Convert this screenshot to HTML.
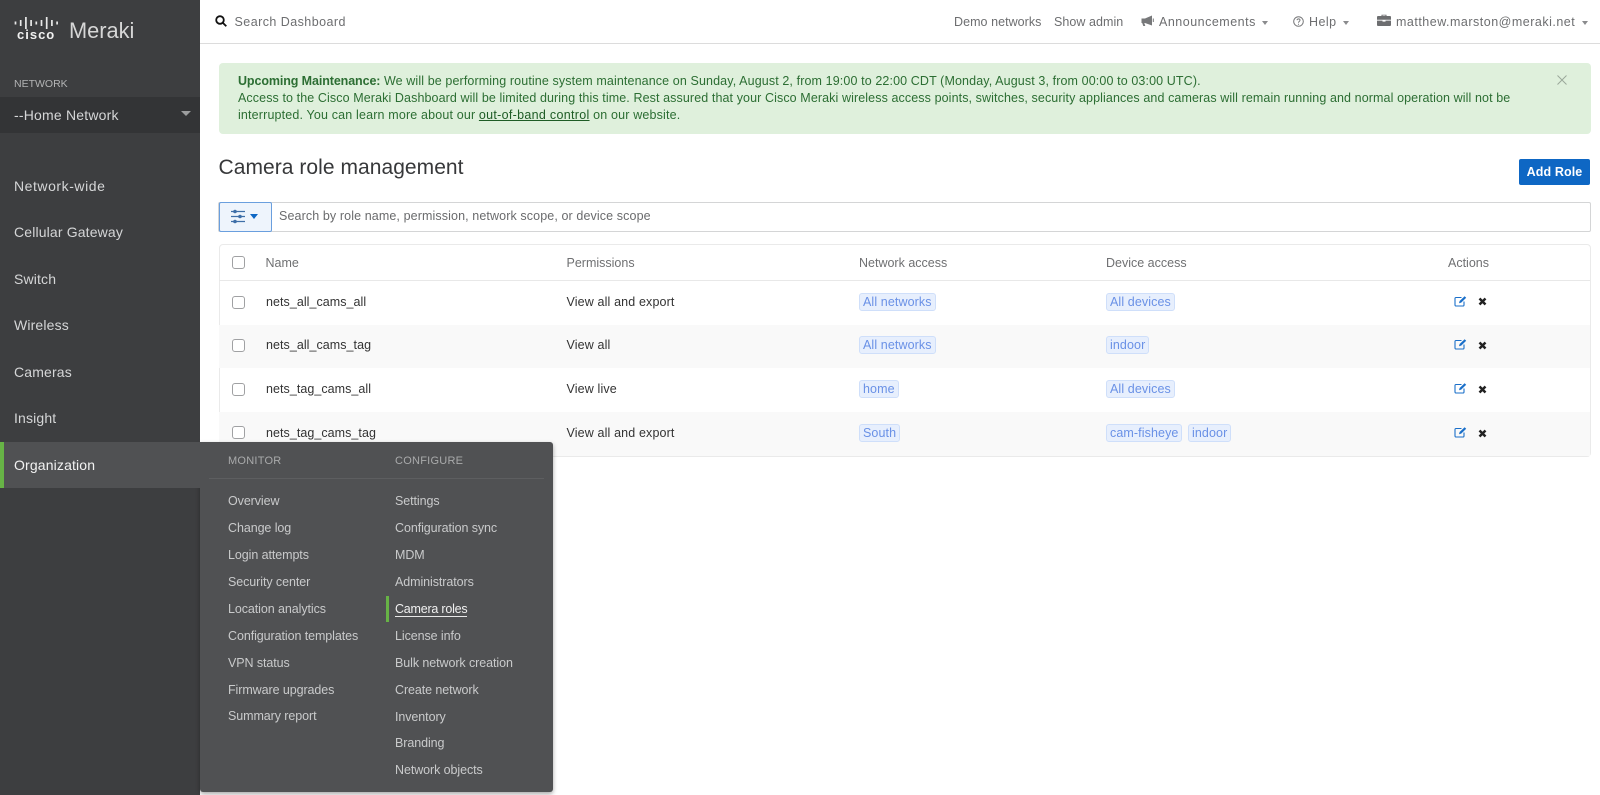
<!DOCTYPE html>
<html><head><meta charset="utf-8"><style>
html,body{margin:0;padding:0;width:1600px;height:795px;overflow:hidden;background:#fff}
body{position:relative;font-family:"Liberation Sans",sans-serif;font-size:13px;color:#333}
.a{position:absolute;white-space:nowrap;line-height:20px;height:20px}
.nav{left:14px;font-size:14px;letter-spacing:.15px;color:#d5d6d7}
.hd{color:#6d6e70;font-size:12.5px;letter-spacing:.05px;top:12px}
.th{top:253px;color:#6f7072;font-size:12.5px;letter-spacing:0}
.td{color:#333;font-size:12.5px;letter-spacing:.05px}
.pm{letter-spacing:.14px}
.tag{position:absolute;height:16px;line-height:16px;padding:0 3px;background:#e7effd;border:1px solid #cfdffa;border-radius:3px;color:#6a91e6;font-size:12.5px;letter-spacing:.1px;white-space:nowrap;box-sizing:content-box}
.cb{position:absolute;left:232px;width:11px;height:11px;border:1px solid #a0a1a3;border-radius:3px;background:#fff}
.m{font-size:12.5px;color:#c9cacb;letter-spacing:-.08px}
.band{position:absolute;left:219px;width:1371px;background:#f9f9f9}
.bn{left:238px;color:#2c6e33;font-size:12.5px;letter-spacing:.1px}
</style></head><body>
<!-- sidebar -->
<div style="position:absolute;left:0;top:0;width:200px;height:795px;background:#3d3e40"></div>
<svg style="position:absolute;left:14px;top:16px" width="46" height="14" viewBox="0 0 46 14" fill="none" stroke="#e8e8e8" stroke-width="1.7"><path d="M1.500 5.500v3M6.700 4v6M11.900 1v12M17.100 4v6M22.300 5.500v3M27.500 4v6M32.700 1v12M37.900 4v6M43.100 5.500v3"/></svg>
<div class="a" style="left:17px;top:25px;font-size:13px;font-weight:bold;color:#f0f0f0;letter-spacing:1px">cisco</div>
<div class="a" style="left:69px;top:20px;height:22px;line-height:22px;font-size:21.800px;color:#d6d6d6;letter-spacing:0">Meraki</div>
<div class="a" style="left:14px;top:74px;font-size:10.500px;color:#b3b4b5;letter-spacing:0">NETWORK</div>
<div style="position:absolute;left:0;top:97px;width:200px;height:36px;background:#333436"></div>
<div class="a" style="left:14px;top:105px;font-size:14px;color:#d5d6d7;letter-spacing:.2px">--Home Network</div>
<div style="position:absolute;left:181px;top:111px;border:5px solid transparent;border-top:5px solid #9c9d9e;border-bottom:0"></div>
<div class="a nav" style="top:176px;letter-spacing:.55px">Network-wide</div>
<div class="a nav" style="top:222px">Cellular Gateway</div>
<div class="a nav" style="top:269px">Switch</div>
<div class="a nav" style="top:315px">Wireless</div>
<div class="a nav" style="top:362px">Cameras</div>
<div class="a nav" style="top:408px">Insight</div>
<!-- header -->
<div style="position:absolute;left:200px;top:43px;width:1400px;height:1px;background:#dcdcdc"></div>
<svg style="position:absolute;left:215px;top:15px" width="12" height="12" viewBox="0 0 12 12" fill="none" stroke="#111" stroke-width="1.800"><circle cx="5" cy="5" r="3.800"/><path d="M8 8l3.300 3.300"/></svg>
<div class="a hd" style="left:234.500px;letter-spacing:.45px">Search Dashboard</div>
<div class="a hd" style="left:954px">Demo networks</div>
<div class="a hd" style="left:1054px">Show admin</div>
<svg style="position:absolute;left:1141px;top:15px" width="13" height="12" viewBox="0 0 13 12" fill="#77787a"><path d="M.5 3.500h3.500L11 .5v10L4 8H3.300l1 3H2.300L1.200 8H.5zM11.800 3.500h1v3.500h-1z"/></svg>
<div class="a hd" style="left:1159px;letter-spacing:.5px">Announcements</div>
<div style="position:absolute;left:1262px;top:21px;border:3.500px solid transparent;border-top:4px solid #8a8b8d;border-bottom:0"></div>
<svg style="position:absolute;left:1293px;top:16px" width="11" height="11" viewBox="0 0 11 11" fill="none" stroke="#77787a"><circle cx="5.500" cy="5.500" r="4.800"/><path d="M4 4.200c.2-1.800 3-1.800 3 0 0 1.200-1.500 1.100-1.500 2.500M5.500 7.700v1"/></svg>
<div class="a hd" style="left:1309px;letter-spacing:.45px">Help</div>
<div style="position:absolute;left:1343px;top:21px;border:3.500px solid transparent;border-top:4px solid #8a8b8d;border-bottom:0"></div>
<svg style="position:absolute;left:1377px;top:14px" width="14" height="12" viewBox="0 0 14 12" fill="#6d6e70"><path d="M4.500 2V.8h5V2H13a1 1 0 0 1 1 1v2.800H0V3a1 1 0 0 1 1-1zM5.500 2h3V1.500h-3zM0 6.600h5.500v1h3v-1H14V11a1 1 0 0 1-1 1H1a1 1 0 0 1-1-1z"/></svg>
<div class="a hd" style="left:1396px;letter-spacing:.5px">matthew.marston@meraki.net</div>
<div style="position:absolute;left:1582px;top:21px;border:3.500px solid transparent;border-top:4px solid #8a8b8d;border-bottom:0"></div>
<!-- banner -->
<div style="position:absolute;left:218.500px;top:63px;width:1372.500px;height:71px;background:#dff0dc;border-radius:4px"></div>
<div class="a bn" style="top:71px;letter-spacing:.115px"><b style="letter-spacing:-.1px">Upcoming Maintenance:</b> We will be performing routine system maintenance on Sunday, August 2, from 19:00 to 22:00 CDT (Monday, August 3, from 00:00 to 03:00 UTC).</div>
<div class="a bn" style="top:88px">Access to the Cisco Meraki Dashboard will be limited during this time. Rest assured that your Cisco Meraki wireless access points, switches, security appliances and cameras will remain running and normal operation will not be</div>
<div class="a bn" style="top:105px;letter-spacing:.16px">interrupted. You can learn more about our <span style="text-decoration:underline;color:#1e5c25;letter-spacing:.3px">out-of-band control</span> on our website.</div>
<svg style="position:absolute;left:1557px;top:75px" width="10" height="10" viewBox="0 0 10 10" stroke="#9aa89a" stroke-width="1"><path d="M.5.500l9 9M9.500.500l-9 9"/></svg>
<!-- title -->
<div class="a" style="left:218.500px;top:155px;height:26px;line-height:26px;font-size:21px;color:#37383a;letter-spacing:.05px">Camera role management</div>
<div class="a" style="left:1519px;top:159px;width:71px;height:26px;line-height:26px;background:#0e67c4;border-radius:2px;color:#fff;text-align:center;font-size:12.5px;font-weight:bold;letter-spacing:.1px">Add Role</div>
<!-- search -->
<div style="position:absolute;left:218px;top:202px;width:1371px;height:28px;border:1px solid #d4d5d6;border-radius:2px"></div>
<div style="position:absolute;left:218.500px;top:202px;width:51px;height:28px;border:1px solid #6a9fde;background:#eef4fc;border-radius:2px"></div>
<svg style="position:absolute;left:230px;top:209px" width="16" height="15" viewBox="0 0 16 15" fill="#3f6fa8" stroke="#3f6fa8"><path d="M1 2.500h14M1 7.500h14M1 12.500h14" stroke-width="1.200"/><circle cx="5" cy="2.500" r="1.300"/><circle cx="10" cy="7.500" r="1.300"/><circle cx="5" cy="12.500" r="1.300"/></svg>
<div style="position:absolute;left:250px;top:214px;border:4px solid transparent;border-top:5px solid #0e67c4;border-bottom:0"></div>
<div class="a" style="left:279px;top:206px;color:#6a6b6d;font-size:12.5px;letter-spacing:.11px">Search by role name, permission, network scope, or device scope</div>
<!-- table -->
<div style="position:absolute;left:218.500px;top:244px;width:1370px;height:211px;border:1px solid #eaeaea;border-radius:4px"></div>
<div style="position:absolute;left:219px;top:280px;width:1371px;height:1px;background:#e8e8e8"></div>
<div class="band" style="top:325px;height:43px"></div>
<div class="band" style="top:412px;height:44px"></div>
<div class="cb" style="top:256px"></div>
<div class="a th" style="left:265.500px">Name</div><div class="a th" style="left:566.500px">Permissions</div><div class="a th" style="left:859px">Network access</div><div class="a th" style="left:1106px">Device access</div><div class="a th" style="left:1448px">Actions</div>

<div class="cb" style="top:296px"></div><div class="a td" style="left:266px;top:292px">nets_all_cams_all</div><div class="a td pm" style="left:566.500px;top:292px">View all and export</div>
<div class="tag" style="left:859px;top:293px">All networks</div><div class="tag" style="left:1106px;top:293px">All devices</div>
<div class="cb" style="top:339px"></div><div class="a td" style="left:266px;top:335px">nets_all_cams_tag</div><div class="a td pm" style="left:566.500px;top:335px">View all</div>
<div class="tag" style="left:859px;top:336px">All networks</div><div class="tag" style="left:1106px;top:336px">indoor</div>
<div class="cb" style="top:383px"></div><div class="a td" style="left:266px;top:379px">nets_tag_cams_all</div><div class="a td pm" style="left:566.500px;top:379px">View live</div>
<div class="tag" style="left:859px;top:380px">home</div><div class="tag" style="left:1106px;top:380px">All devices</div>
<div class="cb" style="top:426px"></div><div class="a td" style="left:266px;top:423px">nets_tag_cams_tag</div><div class="a td pm" style="left:566.500px;top:423px">View all and export</div>
<div class="tag" style="left:859px;top:424px">South</div><div class="tag" style="left:1106px;top:424px">cam-fisheye</div><div class="tag" style="left:1188px;top:424px">indoor</div>

<svg width="0" height="0" style="position:absolute"><defs>
<g id="ed"><path d="M10 6.500V10a1 1 0 0 1-1 1H2a1 1 0 0 1-1-1V3.500a1 1 0 0 1 1-1h5.500" fill="none" stroke="#1a6fc9" stroke-width="1.100"/><path d="M5 8.200l.6-2.200 5-4.800 1.600 1.600-5 4.800z" fill="#1a6fc9"/></g>
<g id="xx"><path d="M1.500 1.500l6 6M7.500 1.500l-6 6" stroke="#222" stroke-width="2.500" fill="none"/></g>
</defs></svg>
<svg style="position:absolute;left:1454px;top:295px" width="14" height="12"><use href="#ed"/></svg><svg style="position:absolute;left:1478px;top:297px" width="9" height="9"><use href="#xx"/></svg>
<svg style="position:absolute;left:1454px;top:338px" width="14" height="12"><use href="#ed"/></svg><svg style="position:absolute;left:1478px;top:341px" width="9" height="9"><use href="#xx"/></svg>
<svg style="position:absolute;left:1454px;top:382px" width="14" height="12"><use href="#ed"/></svg><svg style="position:absolute;left:1478px;top:385px" width="9" height="9"><use href="#xx"/></svg>
<svg style="position:absolute;left:1454px;top:426px" width="14" height="12"><use href="#ed"/></svg><svg style="position:absolute;left:1478px;top:429px" width="9" height="9"><use href="#xx"/></svg>
<!-- flyout -->
<div style="position:absolute;left:200px;top:442px;width:353px;height:350px;background:#505153;border-radius:0 3px 3px 3px;box-shadow:0 2px 5px rgba(0,0,0,.35)"></div>
<div style="position:absolute;left:0;top:442px;width:200px;height:46px;background:#505153"></div>
<div style="position:absolute;left:0;top:442px;width:4px;height:46px;background:#67b346"></div>
<div class="a nav" style="top:455px;color:#f2f2f2">Organization</div>
<div style="position:absolute;left:209px;top:478px;width:335px;height:1px;background:#5d5e60"></div>
<div class="a" style="left:228px;top:451px;font-size:11px;color:#a9aaab;letter-spacing:.25px">MONITOR</div>
<div class="a" style="left:395px;top:451px;font-size:11px;color:#a9aaab;letter-spacing:.25px">CONFIGURE</div>
<div class="a m" style="left:228px;top:491px">Overview</div>
<div class="a m" style="left:228px;top:518px">Change log</div>
<div class="a m" style="left:228px;top:545px">Login attempts</div>
<div class="a m" style="left:228px;top:572px">Security center</div>
<div class="a m" style="left:228px;top:599px">Location analytics</div>
<div class="a m" style="left:228px;top:626px">Configuration templates</div>
<div class="a m" style="left:228px;top:653px">VPN status</div>
<div class="a m" style="left:228px;top:680px">Firmware upgrades</div>
<div class="a m" style="left:228px;top:706px">Summary report</div>
<div class="a m" style="left:395px;top:491px">Settings</div>
<div class="a m" style="left:395px;top:518px">Configuration sync</div>
<div class="a m" style="left:395px;top:545px">MDM</div>
<div class="a m" style="left:395px;top:572px">Administrators</div>
<div style="position:absolute;left:386px;top:596px;width:3px;height:26px;background:#67b346"></div>
<div class="a m" style="left:395px;top:599px;color:#f0f0f0;height:17px;border-bottom:1.500px solid #e8e8e8;letter-spacing:-.22px">Camera roles</div>
<div class="a m" style="left:395px;top:626px">License info</div>
<div class="a m" style="left:395px;top:653px">Bulk network creation</div>
<div class="a m" style="left:395px;top:680px">Create network</div>
<div class="a m" style="left:395px;top:707px">Inventory</div>
<div class="a m" style="left:395px;top:733px">Branding</div>
<div class="a m" style="left:395px;top:759.500px">Network objects</div>
</body></html>
